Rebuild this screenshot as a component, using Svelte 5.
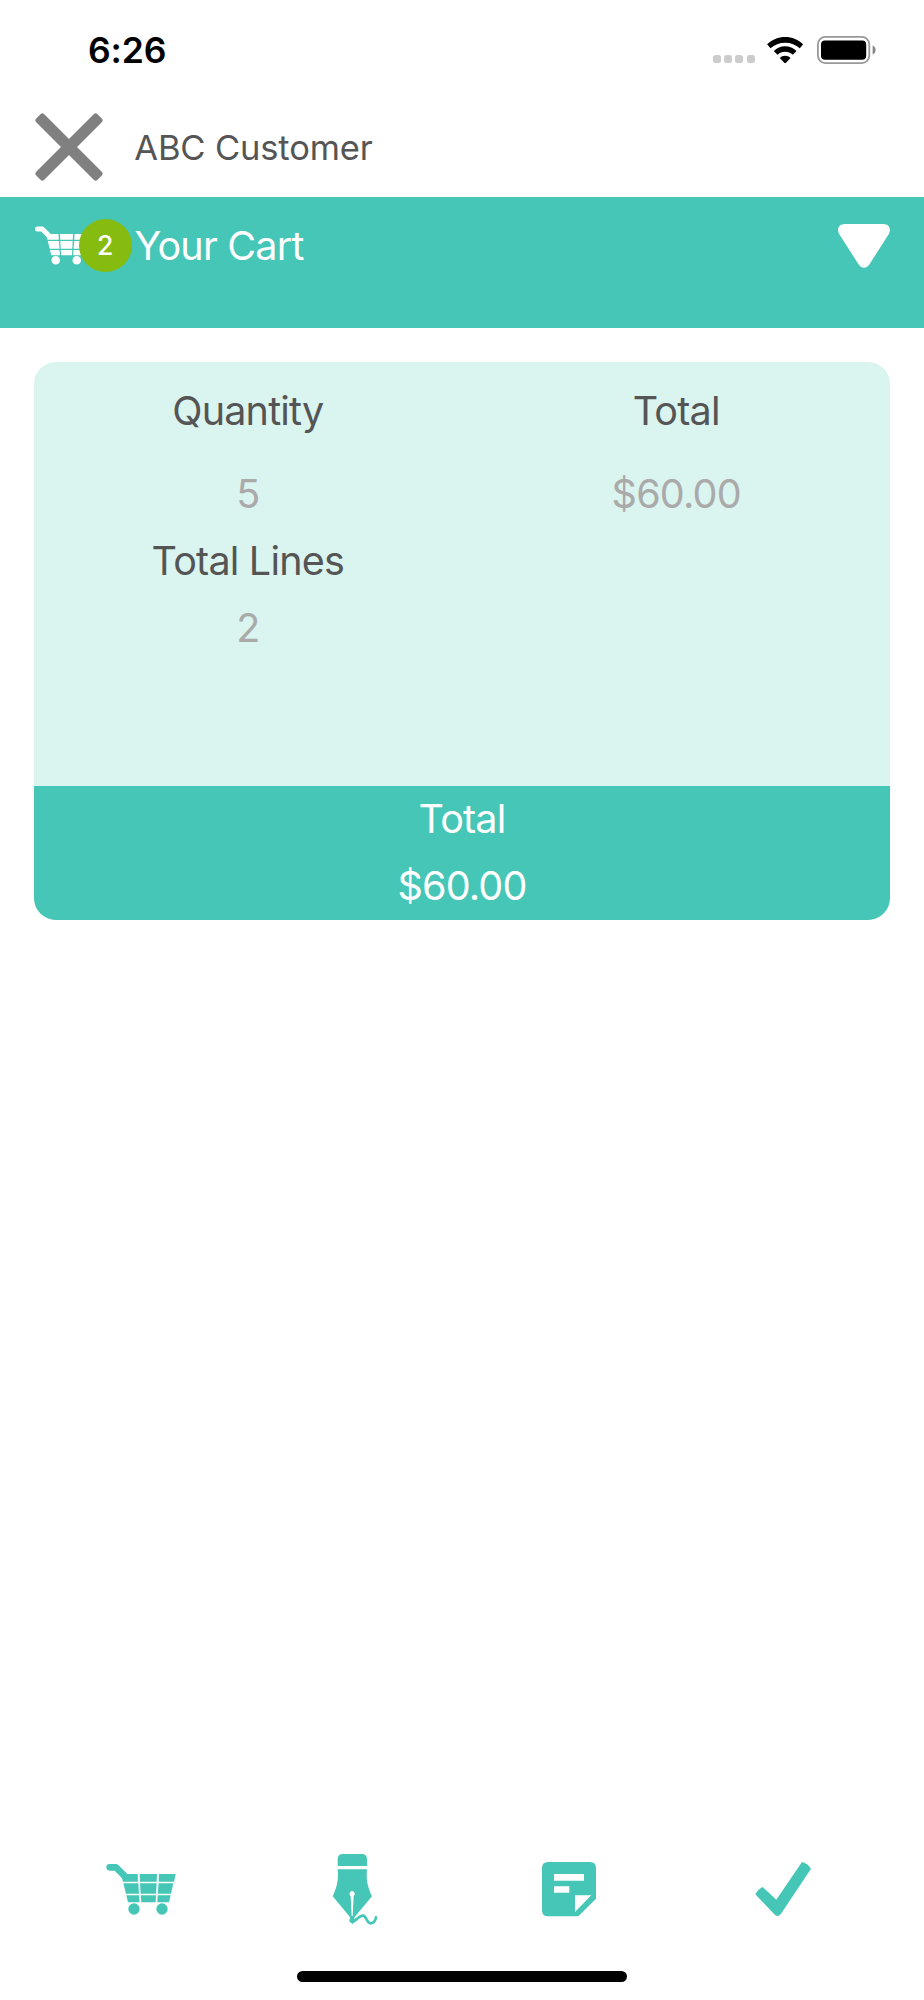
<script lang="ts">
	interface SummaryItem {
		label: string;
		value: string;
	}

	let customer = $state('ABC Customer');
	let cartCount = $state(2);
	let quantity = $state(5);
	let total = $state(60);

	const money = (n: number) => `$${n.toFixed(2)}`;

	let left = $derived<SummaryItem[]>([
		{ label: 'Quantity', value: String(quantity) },
		{ label: 'Total Lines', value: String(cartCount) }
	]);
	let right = $derived<SummaryItem[]>([{ label: 'Total', value: money(total) }]);
</script>

{#snippet cartShape()}
	<path
		d="M58 82 H77 L101 106"
		fill="none"
		stroke="currentColor"
		stroke-width="20"
		stroke-linecap="round"
		stroke-linejoin="round"
	/>
	<path d="M93 102 H142 L143 125 H98 L94 110 Z M148 102 H200 L199 125 H149 Z M206 102 H256 L251 125 H205 Z" />
	<path d="M99 130 H144 L146 161 H107 Z M149 130 H199 L197 161 H151 Z M205 130 H249 L242 161 H202 Z" />
	<path d="M108 166 H146 L148 187 H113 Z M151 166 H197 L196 187 H153 Z M202 166 H241 L236 187 H201 Z" />
	<circle cx="131" cy="207" r="17" />
	<circle cx="215" cy="207" r="17" />
{/snippet}

<div class="screen">
	<div class="status">
		<span class="time">6:26</span>
		<div class="signals">
			<div class="dots"><i></i><i></i><i></i><i></i></div>
			<svg class="wifi" viewBox="0 0 108 80" aria-hidden="true">
				<path d="M54 0 C75 0 94 8 108 22 L98 34 C86 23 71 17 54 17 C37 17 22 23 10 34 L0 22 C14 8 33 0 54 0 Z" />
				<path d="M54 28 C67 28 79 33 88 42 L77 53 C71 47 63 44 54 44 C45 44 37 47 31 53 L20 42 C29 33 41 28 54 28 Z" />
				<path d="M54 56 C60 56 66 58 70 63 L54 80 L38 63 C42 58 48 56 54 56 Z" />
			</svg>
			<svg class="battery" viewBox="0 0 59 28" aria-hidden="true">
				<rect x="0.9" y="0.9" width="51.4" height="26.2" rx="7.5" fill="none" stroke="#999" stroke-width="1.8" />
				<rect x="4" y="4.5" width="45.2" height="19.2" rx="4" />
				<path d="M55.6 9.6 C59.6 11 59.6 17 55.6 18.4 Z" fill="#888" />
			</svg>
		</div>
	</div>

	<div class="customer">
		<button class="close" aria-label="Close">
			<svg viewBox="0 0 204 204" aria-hidden="true">
				<g transform="rotate(45 102 102)" fill="#808080">
					<rect x="-28" y="85" width="260" height="34" rx="8" />
					<rect x="85" y="-28" width="34" height="260" rx="8" />
				</g>
			</svg>
		</button>
		<span>{customer}</span>
	</div>

	<header class="bar">
		<div class="bar-icon">
			<svg class="cart" viewBox="48 70 208 154" fill="currentColor" aria-hidden="true">
				{@render cartShape()}
			</svg>
			<span class="badge">{cartCount}</span>
		</div>
		<h1>Your Cart</h1>
		<svg class="arrow" viewBox="0 0 156 132" aria-hidden="true">
			<path d="M20 0 H136 C154 0 160 16 153 29 L97 117 C87 136 69 136 59 117 L3 29 C-4 16 2 0 20 0 Z" fill="#fff" />
		</svg>
	</header>

	<section class="card">
		<div class="columns">
			{#each [left, right] as items, i (i)}
				<dl>
					{#each items as item (item.label)}
						<dt>{item.label}</dt>
						<dd>{item.value}</dd>
					{/each}
				</dl>
			{/each}
		</div>
		<footer>
			<span>Total</span>
			<span>{money(total)}</span>
		</footer>
	</section>

	<nav class="tabs">
		<button aria-label="Cart">
			<svg viewBox="44 42 216 216" fill="currentColor" aria-hidden="true">
				{@render cartShape()}
			</svg>
		</button>
		<button aria-label="Signature">
			<svg viewBox="27 42 216 216" fill="currentColor" aria-hidden="true">
				<path d="M83 78 V57 Q84 42 98 42 H156 Q170 42 171 57 V78 Z" />
				<path
					fill-rule="evenodd"
					d="M83 88 H171 C168 118 172 140 186 169 L134 231 L127 254 L120 231 L68 169 C82 140 86 118 83 88 Z M126 153 A9 9 0 0 0 122 169 L125 228 H128 L131 169 A9 9 0 0 0 126 153 Z"
				/>
				<circle cx="126" cy="241" r="8" />
				<path
					d="M126 247 C140 240 148 227 159 227 C171 228 168 249 182 250 C193 250 197 240 199 229"
					fill="none"
					stroke="currentColor"
					stroke-width="8"
				/>
			</svg>
		</button>
		<button aria-label="Notes">
			<svg viewBox="39 42 216 216" fill="currentColor" aria-hidden="true">
				<path
					fill-rule="evenodd"
					d="M84 66 H210 Q228 66 228 84 V176 L175 229 H84 Q66 229 66 211 V84 Q66 66 84 66 Z M102 102 V122 H192 V102 Z M102 139 V158 H148 V139 Z M165 166 V216 L214 166 Z"
				/>
			</svg>
		</button>
		<button aria-label="Confirm">
			<svg viewBox="52 42 216 216" fill="currentColor" aria-hidden="true">
				<path d="M77 163 Q86 147 99 141 L140 179 L217 66 Q234 70 244 86 L154 221 Q144 234 134 223 Z" />
			</svg>
		</button>
	</nav>

	<div class="home"></div>
</div>

<style>
	:global(body) {
		background: #fff;
	}
	.screen {
		box-sizing: border-box;
		width: 924px;
		height: 2000px;
		display: flex;
		flex-direction: column;
		overflow: hidden;
		background: #fff;
		color: #555;
		font-family: Inter, 'Liberation Sans', sans-serif;
	}
	button {
		padding: 0;
		border: 0;
		background: none;
		color: inherit;
	}
	svg {
		display: block;
		flex: none;
	}
	.status {
		box-sizing: border-box;
		height: 98px;
		padding: 2px 48.5px 0 88px;
		display: flex;
		align-items: center;
		justify-content: space-between;
		color: #000;
	}
	.time {
		font-size: 35.5px;
		font-weight: 600;
		letter-spacing: -0.1px;
	}
	.signals {
		display: flex;
		align-items: center;
	}
	.dots {
		display: flex;
		gap: 3.2px;
		margin: 18px 12.7px 0 0;
	}
	.dots i {
		width: 8px;
		height: 8px;
		border-radius: 2.5px;
		background: #ccc;
	}
	.wifi {
		width: 36.3px;
		height: 26.7px;
		margin-right: 13px;
	}
	.battery {
		width: 59px;
		height: 28px;
	}
	.customer {
		height: 98.6px;
		padding-left: 35.3px;
		display: flex;
		align-items: center;
		gap: 31px;
		font-size: 34.5px;
		letter-spacing: -0.15px;
	}
	.close svg {
		width: 68px;
		height: 68px;
		overflow: visible;
	}
	.bar {
		box-sizing: border-box;
		height: 131.2px;
		padding: 16px 34px 0;
		display: flex;
		align-items: flex-start;
		background: #45c6b6;
		color: #fff;
		line-height: 67px;
	}
	.bar-icon {
		position: relative;
		width: 100.5px;
		padding-top: 13.9px;
	}
	.bar .cart {
		width: 52px;
		height: 38.5px;
		margin-left: 0.5px;
	}
	.badge {
		position: absolute;
		left: 44.7px;
		top: 6.5px;
		width: 53px;
		height: 53px;
		border-radius: 50%;
		background: #86bc0f;
		font-size: 26.5px;
		font-weight: 500;
		line-height: 53px;
		text-align: center;
	}
	h1 {
		margin: 0;
		flex: 1;
		font-size: 39.5px;
		font-weight: 400;
		letter-spacing: -0.8px;
	}
	.arrow {
		width: 52px;
		height: 44px;
		margin-top: 11px;
	}
	.card {
		margin: 34.2px 33.6px 0;
		height: 557.6px;
		display: flex;
		flex-direction: column;
		border-radius: 22px;
		overflow: hidden;
		background: #daf4f0;
		font-size: 39.5px;
		line-height: 66.8px;
		letter-spacing: -0.8px;
		text-align: center;
	}
	.columns {
		flex: 1;
		display: grid;
		grid-template-columns: 1fr 1fr;
		padding-top: 16.5px;
	}
	dl,
	dd {
		margin: 0;
	}
	dt:first-child {
		margin-bottom: 16px;
	}
	dd {
		color: #aaa;
	}
	footer {
		height: 134px;
		display: flex;
		flex-direction: column;
		background: #45c6b6;
		color: #fff;
	}
	footer span:first-child {
		padding-top: 0.6px;
	}
	.tabs {
		margin: auto 33.7px 45px;
		display: grid;
		grid-template-columns: repeat(4, 1fr);
		justify-items: center;
		color: #45c6b6;
	}
	.tabs svg {
		width: 72px;
		height: 72px;
	}
	.home {
		align-self: center;
		width: 330px;
		height: 11px;
		margin-bottom: 18px;
		border-radius: 6px;
		background: #000;
	}
</style>
